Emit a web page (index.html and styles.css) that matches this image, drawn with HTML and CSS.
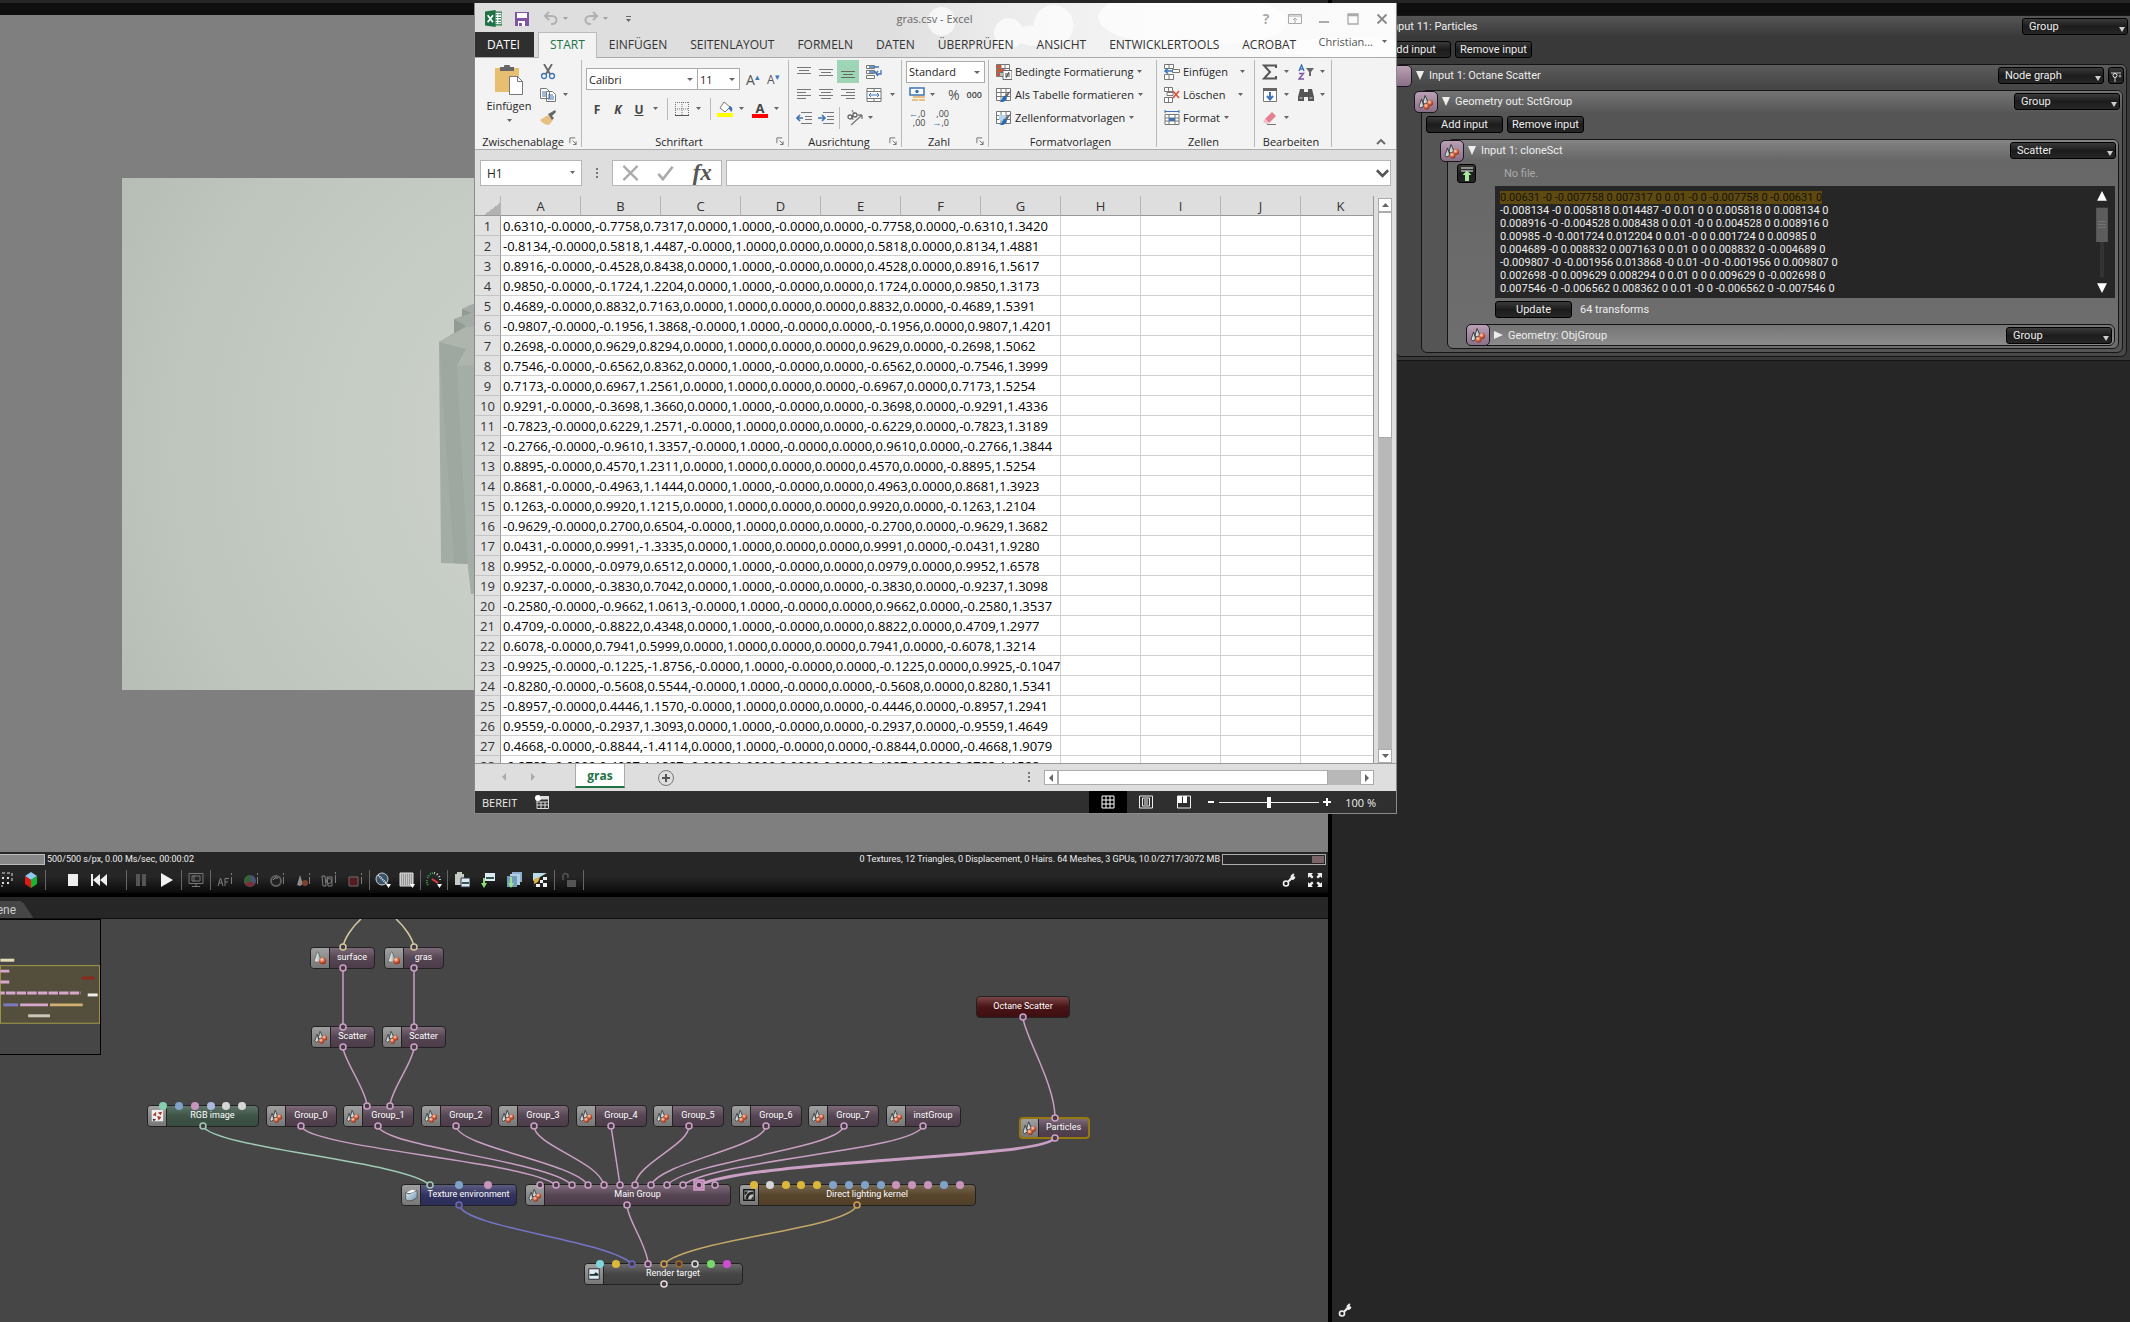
FILE: index.html
```html
<!DOCTYPE html>
<html lang="de">
<head>
<meta charset="utf-8">
<title>gras.csv - Excel</title>
<link rel="stylesheet" href="styles.css">
</head>
<body>
<svg class="defs" aria-hidden="true">
  <defs>
    <radialGradient id="ball" cx="40%" cy="35%" r="65%"><stop offset="0" stop-color="#ffe0d0"/><stop offset=".5" stop-color="#dc6c48"/><stop offset="1" stop-color="#8c2c16"/></radialGradient>
    <linearGradient id="cone" x1="0" x2="1" y1="0" y2="0"><stop offset="0" stop-color="#ffffff"/><stop offset="1" stop-color="#8ba6aa"/></linearGradient>
    <linearGradient id="glass" x1="0" x2="1" y1="0" y2="1"><stop offset="0" stop-color="#e9f4fb"/><stop offset="1" stop-color="#6f92ad"/></linearGradient>
    <symbol id="mesh" viewBox="0 0 16 16"><path d="M4.500 1.500 6 1l3 9-3 3-4.500-1z" fill="url(#cone)" stroke="#444" stroke-width=".6"/><circle cx="11" cy="11" r="4" fill="url(#ball)"/></symbol>
    <symbol id="scat" viewBox="0 0 16 16"><path d="M7 1.500 10 8 7 10 5 9z" fill="url(#cone)" stroke="#222" stroke-width=".8"/><path d="M3.500 5 6 12l-3 2-2-1.500z" fill="url(#cone)" stroke="#222" stroke-width=".8"/><circle cx="12" cy="9" r="3" fill="url(#ball)"/><circle cx="8.500" cy="12.500" r="3" fill="url(#ball)"/></symbol>
    <symbol id="caret" viewBox="0 0 7 4"><path d="M1 0h5L3.500 3z" fill="#666"/></symbol>
    <symbol id="launch" viewBox="0 0 9 9"><path d="M1 7V1h6M4 4l4 4M8 5v3.500H4.500" fill="none" stroke="#666"/></symbol>
    <symbol id="wrench" viewBox="0 0 14 14"><path d="M6 8 9 4.500a3 3 0 0 1 3-3.500l-1 2 .5 1L13 4a3 3 0 0 1-3.500 2.500L6.500 9" fill="#eee" stroke="#eee"/><circle cx="4" cy="10.500" r="2.500" fill="none" stroke="#eee" stroke-width="1.600"/></symbol>
    <symbol id="tbl" viewBox="0 0 16 16"><path d="M.5 1.500h14v12H.5zM.5 5.500h14M.5 9.500h14M5 1.500v12M10 1.500v12" fill="#fff" stroke="#777"/></symbol>
    <symbol id="brush" viewBox="0 0 16 16"><path d="M15.500 3 11 10l-2-2z" fill="#666"/><path d="M9.500 8.500c2 1 1.500 3 0 5-2 2-4 1.500-6 1.500 3-1 2-6 6-6.500z" fill="#2b6cb5"/></symbol>
  </defs>
</svg>

<div class="app">
  <main class="left">
    <div class="topline"></div>
    <section class="viewport">
      <svg class="render" viewBox="0 0 1084 512" preserveAspectRatio="xMinYMid slice">
        <defs><radialGradient id="fog" gradientUnits="userSpaceOnUse" cx="480" cy="270" r="540"><stop offset="0" stop-color="#d0d5ce"/><stop offset=".5" stop-color="#c5ccc4"/><stop offset=".8" stop-color="#bdc5bd"/><stop offset="1" stop-color="#b6beb6"/></radialGradient></defs>
        <rect width="1084" height="512" fill="url(#fog)"/>
        <path d="m317 164 15-9v-14l8-3v-7l8-4 22-6v295h-21l-2-30-28-1z" fill="#a4ada5"/>
        <path d="m317 164 26 7-8 17 12 198-15-1z" fill="#9fa8a0"/><path d="m332 141 12 7-12 7zM340 131l10 4-10 3z" fill="#929b93"/>
        <path d="m335 188 9-17 30-2v247h-25l-3-26z" fill="#a5aea6"/><path d="m317 164 28-15h30v36l-40 3 9-17z" fill="#adb5ad"/>
      </svg>
    </section>
    <section class="controls">
      <div class="status">
        <span class="progress"></span><span>500/500 s/px, 0.00 Ms/sec, 00:00:02</span>
        <span class="stats">0 Textures, 12 Triangles, 0 Displacement, 0 Hairs. 64 Meshes, 3 GPUs, 10.0/2717/3072 MB</span><span class="mem"><i></i></span>
      </div>
      <div class="tools">
        <button aria-label="Region"><svg viewBox="0 0 16 16"><path d="M5 1h10v10M4 14h2" stroke="#ddd" fill="none" stroke-dasharray="3 2"/><path d="M5 5h2v2H5zM10 5h2v2h-2zM5 10h2v2H5zM10 10h2v2h-2z" fill="#ddd"/></svg></button>
        <button aria-label="Cube"><svg viewBox="0 0 16 16"><path d="m8 0 6 4-6 4-6-4z" fill="#8fc9ee"/><path d="m2 4 6 4v8l-6-4z" fill="#e01818"/><path d="m14 4-6 4v8l6-4z" fill="#16b52e"/></svg></button>
        <hr><span class="space"></span>
        <button aria-label="Stop"><svg viewBox="0 0 16 16"><path d="M3 2h10v12H3z" fill="#eee"/></svg></button>
        <button aria-label="Restart"><svg viewBox="0 0 16 16"><path d="M0 2h2v12H0zM9 2v12L2 8zM16 2v12L9 8z" fill="#eee"/></svg></button>
        <span class="space"></span><hr>
        <button aria-label="Pause"><svg viewBox="0 0 16 16"><path d="M3 2h4v12H3zM9 2h4v12H9z" fill="#555"/></svg></button>
        <button aria-label="Play"><svg viewBox="0 0 16 16"><path d="M2 1v14l12-7z" fill="#f2f2f2"/></svg></button>
        <hr>
        <button aria-label="Real time"><svg viewBox="0 0 16 16"><path d="M1 1.500h14v10H1zM4 14.500h8M8 12v2M4 4v5h8V4zM6 3v7" fill="none" stroke="#777"/></svg></button>
        <hr>
        <button class="dim" aria-label="Autofocus"><svg viewBox="0 0 16 16"><path d="m1 14 2.500-8L6 14M2 11h3M8 14V6.500h4M8 10h3M14.500 5v7M14.500 1v2" fill="none" stroke="#888"/></svg></button>
        <button class="dim" aria-label="White point"><svg viewBox="0 0 16 16"><circle cx="7" cy="9" r="6" fill="#4a5c7a"/><path d="M7 9V3a6 6 0 0 0-5 9z" fill="#396b35"/><path d="M7 9 2 12a6 6 0 0 0 10 0z" fill="#86303a"/><path d="M14.500 5v7M14.500 1v2" stroke="#888"/></svg></button>
        <button class="dim" aria-label="Material"><svg viewBox="0 0 16 16"><circle cx="7" cy="9" r="5" fill="#222" stroke="#666" stroke-width="2"/><path d="M4 8a4 4 0 0 1 5-2" fill="none" stroke="#aaa"/><path d="M14.500 5v7M14.500 1v2" stroke="#888"/></svg></button>
        <button class="dim" aria-label="Object"><svg viewBox="0 0 16 16"><path d="m5 3 3 9-3 2-3-1z" fill="#999"/><circle cx="10" cy="11" r="3" fill="#84492e"/><path d="M14.500 5v7M14.500 1v2" stroke="#888"/></svg></button>
        <button class="dim" aria-label="Camera"><svg viewBox="0 0 16 16"><path d="M1 4h3l1 10H2zM6 5h5v9H7z" fill="none" stroke="#888"/><circle cx="8" cy="9" r="2.500" fill="none" stroke="#888"/><path d="M14.500 3v8M14.500 0v2" stroke="#888"/></svg></button>
        <button class="dim" aria-label="Region pick"><svg viewBox="0 0 16 16"><path d="M2 5h9v9H2z" fill="#5a1c1c" stroke="#777"/><path d="M14.500 5v7M14.500 1v2" stroke="#888"/></svg></button>
        <hr>
        <button class="nar" aria-label="Render mode"><svg viewBox="0 0 16 16"><circle cx="7" cy="7" r="6" fill="#38546a" stroke="#ccc"/><path d="m3 3 9 9" stroke="#eee" stroke-width="2" stroke-dasharray="1 1"/><path d="M11 12h5l-2.500 4z" fill="#fff"/></svg></button>
        <button class="nar" aria-label="Alpha"><svg viewBox="0 0 16 16"><path d="M1 1h13v13H1z" fill="#999"/><path d="M1 2h13M1 4h13M1 6h13M1 8h13M1 10h13M1 12h13" stroke="#eee" stroke-dasharray="1 1"/><path d="M1 1h13v13H1z" fill="none" stroke="#ddd"/><path d="M11 12h5l-2.500 4z" fill="#fff"/></svg></button>
        <hr>
        <button class="nar" aria-label="Priority"><svg viewBox="0 0 16 16"><path d="M2 13a7 7 0 0 1-1-5M1.500 6 3 3M4 2l3-1" stroke="#35a04a" stroke-width="2" stroke-dasharray="1 1" fill="none"/><path d="M8 1a7 7 0 0 1 6 7" stroke="#d8d8d8" stroke-width="2" stroke-dasharray="1 2" fill="none"/><path d="m6 7 6 4" stroke="#e04040" stroke-width="2"/><path d="M11 12h5l-2.500 4z" fill="#fff"/></svg></button>
        <hr>
        <button aria-label="Copy"><svg viewBox="0 0 16 16"><path d="M1 2h9v11H1zM3 0h5v3H3z" fill="#c4ccc4"/><path d="M7 6h9v9H7z" fill="#dcebf2" stroke="#334"/><path d="M8 10h7v2H8z" fill="#355"/></svg></button>
        <button aria-label="Save image"><svg viewBox="0 0 16 16"><path d="M5 1h10v8H5z" fill="#dcebf2"/><path d="M6 5h8v2H6z" fill="#355"/><path d="M3 6h2v5h2l-3 5-3-5h2z" fill="#8fdc7a"/></svg></button>
        <button aria-label="Save all"><svg viewBox="0 0 16 16"><path d="M6 0h10v10H6z" fill="#8fb0cc"/><path d="M4 2h10v11H4z" fill="#b5cfe2"/><path d="M1 4h10v11H1z" fill="#6f9dbb"/><path d="M4 5h2v6h2l-3 5-3-5h2z" fill="#9fe08a"/></svg></button>
        <button aria-label="Background"><svg viewBox="0 0 16 16"><path d="M1 1h14v14H1z" fill="#222"/><path d="M1 1h14L1 9z" fill="#b8dcea"/><path d="M8 8h3v3H8zM11 5h4v3h-4zM11 11h4v4h-4zM4 12h4v3H4z" fill="#eee"/><path d="m2 7 6-2-2 5-4 2z" fill="#d8b042"/></svg></button>
        <hr>
        <button aria-label="Lock"><svg viewBox="0 0 16 16"><path d="M2 8V4a2 2 0 0 1 5 0v2" fill="none" stroke="#555" stroke-width="1.500"/><path d="M6 8h9v7H6z" fill="#555"/></svg></button>
        <hr>
        <span class="push"></span>
        <button aria-label="Settings"><svg class="s14" viewBox="0 0 14 14"><use href="#wrench"/></svg></button>
        <button aria-label="Fullscreen"><svg class="s14" viewBox="0 0 14 14"><path d="M0 0h5L3.500 1.500 5.500 4 4 5.500 1.500 3.500 0 5zM14 0H9l1.500 1.500L8.500 4 10 5.500l2.500-2L14 5zM0 14h5l-1.500-1.500 2-2.500L4 8.500l-2.500 2L0 9zM14 14H9l1.500-1.500-2-2.500L10 8.500l2.500 2L14 9z" fill="#eee"/></svg></button>
      </div>
    </section>
    <div class="tabs"><button>Scene</button></div>
    <section class="graph">
      <svg class="edges" aria-hidden="true">
        <g fill="none" stroke-width="1.500">
          <path stroke="#d2cba2" d="M343 28C344 20 352 8 361 0M414 28C413 20 405 8 396 0"/>
          <g stroke="#c99fc4">
            <path d="M343 49V108M414 49V108M343 128C343 140 367 172 367 187M414 128C414 142 390 172 390 187"/>
            <path d="M301 207C309 229 526 242 556 266M378 207C384 228 548 242 572 266M456 207C459 228 572 243 588 266M534 207C534 226 598 242 604 266M611 207 620 266M689 207C689 226 637 244 635 266M766 207C764 228 662 243 651 266M844 207C838 230 690 242 667 266M923 207C912 232 720 240 683 266"/>
            <path d="M627 286C627 300 648 328 648 345M1023 98C1023 114 1055 164 1055 199"/>
            <path stroke-width="3" d="M1055 219C1040 240 760 240 699 266"/>
          </g>
          <path stroke="#9fccb6" d="M203 207C212 229 404 242 430 266"/>
          <path stroke="#7674c8" d="M459 286C464 309 608 321 632 345"/>
          <path stroke="#c4a868" d="M857 286C849 310 688 320 664 345"/>
        </g>
      </svg>
      <div class="node" style="left:310px;top:28px;width:65px"><svg><use href="#mesh"/></svg><span>surface</span></div>
      <div class="node" style="left:384px;top:28px;width:60px"><svg><use href="#mesh"/></svg><span>gras</span></div>
      <div class="node" style="left:311px;top:107px;width:64px"><svg><use href="#scat"/></svg><span>Scatter</span></div>
      <div class="node" style="left:382px;top:107px;width:64px"><svg><use href="#scat"/></svg><span>Scatter</span></div>
      <div class="node green" style="left:147px;top:186px;width:112px"><svg viewBox="0 0 16 16"><path d="M2 1h13v13H2z" fill="#eee"/><path d="m3 7 4-4v5zM9 4l5-1-2 4zM8 8l5 1-3 4z" fill="#a33a2c"/><path d="m3 11 4 1-3 2z" fill="#222"/></svg><span>RGB image</span></div>
      <div class="node" style="left:266px;top:186px;width:71px"><svg><use href="#scat"/></svg><span>Group_0</span></div>
      <div class="node" style="left:343px;top:186px;width:71px"><svg><use href="#scat"/></svg><span>Group_1</span></div>
      <div class="node" style="left:421px;top:186px;width:71px"><svg><use href="#scat"/></svg><span>Group_2</span></div>
      <div class="node" style="left:498px;top:186px;width:71px"><svg><use href="#scat"/></svg><span>Group_3</span></div>
      <div class="node" style="left:576px;top:186px;width:71px"><svg><use href="#scat"/></svg><span>Group_4</span></div>
      <div class="node" style="left:653px;top:186px;width:71px"><svg><use href="#scat"/></svg><span>Group_5</span></div>
      <div class="node" style="left:731px;top:186px;width:71px"><svg><use href="#scat"/></svg><span>Group_6</span></div>
      <div class="node" style="left:808px;top:186px;width:71px"><svg><use href="#scat"/></svg><span>Group_7</span></div>
      <div class="node" style="left:886px;top:186px;width:75px"><svg><use href="#scat"/></svg><span>instGroup</span></div>
      <div class="node blue" style="left:401px;top:265px;width:116px"><svg viewBox="0 0 16 16"><path d="M2 5c2 2 5 2 7 0l6-2v8l-5 3c-3 1-6 1-8-1z" fill="url(#glass)" stroke="#333" stroke-width=".7"/><path d="M3 5c2 1 4 1 6 0l5-2-5-1z" fill="#fff"/></svg><span>Texture environment</span></div>
      <div class="node" style="left:525px;top:265px;width:206px"><svg><use href="#scat"/></svg><span>Main Group</span></div>
      <div class="node brown" style="left:739px;top:265px;width:237px"><svg viewBox="0 0 16 16"><path d="M2 2h12v12H2z" fill="#bbb" stroke="#111" stroke-width="1.500"/><path d="M4 13c0-5 3-9 9-9v3c-4 0-6 2-6 6zM3 4h4L4 8H3zM10 13l3-4v4z" fill="#222"/></svg><span>Direct lighting kernel</span></div>
      <div class="node gray" style="left:584px;top:344px;width:159px"><svg viewBox="0 0 16 16"><path d="M2 2h12v12H2z" fill="#dfe9f4" stroke="#222"/><path d="M3 8h5l2-2 3 2v2H3z" fill="#1c3328"/></svg><span>Render target</span></div>
      <div class="node red" style="left:976px;top:77px;width:94px"><span>Octane Scatter</span></div>
      <div class="node sel" style="left:1019px;top:198px;width:71px"><svg><use href="#scat"/></svg><span>Particles</span></div>
      <svg class="edges" aria-hidden="true">
        <g fill="#463a46" stroke="#cfa0c8" stroke-width="1.500">
          <g stroke="#cfc9a0"><circle cx="343" cy="28" r="3"/><circle cx="414" cy="28" r="3"/></g>
          <circle cx="343" cy="49" r="3"/><circle cx="414" cy="49" r="3"/><circle cx="343" cy="108" r="3"/><circle cx="414" cy="108" r="3"/><circle cx="343" cy="128" r="3"/><circle cx="414" cy="128" r="3"/><circle cx="367" cy="187" r="3"/><circle cx="390" cy="187" r="3"/>
          <circle cx="301" cy="207" r="3"/><circle cx="378" cy="207" r="3"/><circle cx="456" cy="207" r="3"/><circle cx="534" cy="207" r="3"/><circle cx="611" cy="207" r="3"/><circle cx="689" cy="207" r="3"/><circle cx="766" cy="207" r="3"/><circle cx="844" cy="207" r="3"/><circle cx="923" cy="207" r="3"/>
          <circle cx="540" cy="266" r="3"/><circle cx="556" cy="266" r="3"/><circle cx="572" cy="266" r="3"/><circle cx="588" cy="266" r="3"/><circle cx="604" cy="266" r="3"/><circle cx="620" cy="266" r="3"/><circle cx="635" cy="266" r="3"/><circle cx="651" cy="266" r="3"/><circle cx="667" cy="266" r="3"/><circle cx="683" cy="266" r="3"/><rect x="694" y="261" width="10" height="10" fill="#b878b0"/><circle cx="699" cy="266" r="3"/><circle cx="715" cy="266" r="3"/>
          <circle cx="627" cy="286" r="3"/><circle cx="648" cy="345" r="3"/><circle cx="1023" cy="98" r="3"/><circle cx="1055" cy="199" r="3"/><circle cx="1055" cy="219" r="3"/>
          <g stroke="#9fccb6"><circle cx="203" cy="207" r="3"/><circle cx="430" cy="266" r="3"/></g>
          <g stroke="#6a68c0"><circle cx="459" cy="286" r="3"/><circle cx="632" cy="345" r="3"/></g>
          <g stroke="#d0a24e"><circle cx="857" cy="286" r="3"/><circle cx="664" cy="345" r="3"/></g>
          <circle cx="679" cy="345" r="3" stroke="#a36a20"/><g stroke="#ddd"><circle cx="695" cy="345" r="3"/><circle cx="664" cy="365" r="3"/></g>
        </g>
        <g fill="#7fa3c8"><circle cx="179" cy="187" r="4"/><circle cx="459" cy="266" r="4"/><circle cx="833" cy="266" r="4"/><circle cx="849" cy="266" r="4"/><circle cx="865" cy="266" r="4"/><circle cx="881" cy="266" r="4"/><circle cx="944" cy="266" r="4"/><circle cx="211" cy="187" r="4" fill="#a9b9de"/></g>
        <g fill="#c795bc"><circle cx="195" cy="187" r="4"/><circle cx="488" cy="266" r="4"/><circle cx="896" cy="266" r="4"/><circle cx="912" cy="266" r="4"/><circle cx="928" cy="266" r="4"/><circle cx="960" cy="266" r="4"/></g>
        <g fill="#dcb83a"><circle cx="754" cy="266" r="4"/><circle cx="786" cy="266" r="4"/><circle cx="801" cy="266" r="4"/><circle cx="817" cy="266" r="4"/><circle cx="616" cy="345" r="4"/></g>
        <g fill="#d6d6d6"><circle cx="226" cy="187" r="4"/><circle cx="242" cy="187" r="4"/><circle cx="770" cy="266" r="4"/></g>
        <circle cx="163" cy="187" r="4" fill="#86d0b0"/><circle cx="600" cy="345" r="4" fill="#80d8dc"/><circle cx="711" cy="345" r="4" fill="#78d86c"/><circle cx="727" cy="345" r="4" fill="#d04cd0"/>
      </svg>
      <svg class="minimap" viewBox="0 0 100 135">
        <rect y="46" width="100" height="58" fill="#544e3c" stroke="#a59c48"/>
        <path d="M0 39h14v3H0z" fill="#e2dcb6"/><path d="M82 57h13v3H82z" fill="#8a2a1c"/>
        <path d="M0 50h9v3H0zM0 61h9v3H0zM20 84h28v3H20z" fill="#d8a8cc"/><path d="M0 73.500h81" stroke="#d8a8cc" stroke-width="3" stroke-dasharray="9.500 1.200" stroke-dashoffset="5"/>
        <path d="M88 74h10v3H88z" fill="#eee"/><path d="M3 84h15v3H3z" fill="#7b79c0"/><path d="M50 84h33v3H50z" fill="#d2b070"/><path d="M28 95h22v3H28z" fill="#c9c5b8"/>
      </svg>
    </section>
  </main>

  <aside class="right">
    <div class="topline"></div>
    <div class="box outer">
      <header><span class="ttl">Input 11: Particles</span><span class="sel-w"><select aria-label="Particles type"><option>Group</option></select></span></header>
      <div class="btns"><button>Add input</button><button>Remove input</button></div>
      <div class="box b1">
        <header><i class="pin"></i><b class="tri"></b><span class="ttl">Input 1: Octane Scatter</span><span class="sel-w"><select aria-label="Octane Scatter type"><option>Node graph</option></select></span><button class="mini" aria-label="Open graph"><svg viewBox="0 0 12 14"><path d="M1 4h10M5 8v5" stroke="#ccc"/><circle cx="5" cy="6.500" r="2" fill="#222" stroke="#eee"/><circle cx="10" cy="7" r="1.500" fill="#888"/></svg></button></header>
        <div class="box b2">
          <header><i class="pin"><svg><use href="#scat"/></svg></i><b class="tri"></b><span class="ttl">Geometry out: SctGroup</span><span class="sel-w"><select aria-label="SctGroup type"><option>Group</option></select></span></header>
          <div class="btns"><button>Add input</button><button>Remove input</button></div>
          <div class="box b3">
            <header><i class="pin"><svg><use href="#scat"/></svg></i><b class="tri"></b><span class="ttl">Input 1: cloneSct</span><span class="sel-w"><select aria-label="cloneSct type"><option>Scatter</option></select></span></header>
            <div class="file"><button aria-label="Load file"><svg viewBox="0 0 14 14"><path d="M1 1h12M1 4h12" stroke="#eee"/><path d="M7 3.500 11.500 8H9v6H5V8H2.500z" fill="#a8e89a"/></svg></button><span>No file.</span></div>
            <div class="data">
              <div class="lines" tabindex="0"><mark>0.00631 -0 -0.007758 0.007317 0 0.01 -0 0 -0.007758 0 -0.00631 0</mark><br>-0.008134 -0 0.005818 0.014487 -0 0.01 0 0 0.005818 0 0.008134 0<br>0.008916 -0 -0.004528 0.008438 0 0.01 -0 0 0.004528 0 0.008916 0<br>0.00985 -0 -0.001724 0.012204 0 0.01 -0 0 0.001724 0 0.00985 0<br>0.004689 -0 0.008832 0.007163 0 0.01 0 0 0.008832 0 -0.004689 0<br>-0.009807 -0 -0.001956 0.013868 -0 0.01 -0 0 -0.001956 0 0.009807 0<br>0.002698 -0 0.009629 0.008294 0 0.01 0 0 0.009629 0 -0.002698 0<br>0.007546 -0 -0.006562 0.008362 0 0.01 -0 0 -0.006562 0 -0.007546 0</div>
              <svg class="scr" viewBox="0 0 14 104"><path d="M7 0l5 10H2zM7 104l5-10H2z" fill="#fff"/><path d="M5 52h4v36H5z" fill="#333"/><path d="M1 17h12v35H1z" fill="#5c5c5c"/><path d="M3 31h8M3 34h8M3 37h8" stroke="#777"/></svg>
            </div>
            <div class="btns upd"><button>Update</button><span>64 transforms</span></div>
            <div class="box b4"><header><i class="pin"><svg><use href="#scat"/></svg></i><b class="tri side"></b><span class="ttl">Geometry: ObjGroup</span><span class="sel-w"><select aria-label="ObjGroup type"><option>Group</option></select></span></header></div>
          </div>
        </div>
      </div>
    </div>
    <button class="cfg" aria-label="Panel settings"><svg class="s14" viewBox="0 0 14 14"><use href="#wrench"/></svg></button>
  </aside>
</div>

<div class="excel">
  <div class="head">
    <svg class="clouds" viewBox="0 0 520 53" preserveAspectRatio="none" aria-hidden="true"><defs><linearGradient id="sky"><stop offset="0" stop-color="#dedede"/><stop offset=".2" stop-color="#eaeaea"/><stop offset=".6" stop-color="#f8f8f8"/><stop offset="1" stop-color="#fbfbfb"/></linearGradient></defs><path d="M0 0H520V53H0z" fill="url(#sky)"/><g fill="#fff" opacity=".7"><circle cx="62" cy="18" r="14"/><circle cx="130" cy="30" r="15"/><circle cx="175" cy="22" r="20"/><ellipse cx="155" cy="32" rx="20" ry="10"/><ellipse cx="280" cy="14" rx="60" ry="24"/><ellipse cx="350" cy="18" rx="60" ry="22"/><ellipse cx="470" cy="44" rx="70" ry="10"/></g></svg>
    <div class="title">
      <div class="qat">
        <svg viewBox="0 0 16 16"><path d="M8 2h8v12H8z" fill="#fff" stroke="#207245"/><path d="M10 4.500h1.500m1 0H15M10 7h1.500m1 0H15M10 9.500h1.500m1 0H15M10 12h1.500m1 0H15" stroke="#207245"/><path d="M0 1.500 10 0v16L0 14.500z" fill="#207245"/><path d="m2.500 5 5 6.500M7.500 5l-5 6.500" stroke="#fff" stroke-width="1.600"/></svg>
        <button aria-label="Speichern"><svg viewBox="0 0 16 16"><path d="M1 1h14v14H1z" fill="#8054a5"/><path d="M3 2h10v5H3z" fill="#fff"/><path d="M4 10h7v5H4z" fill="#fff"/><path d="M5 12h3v3H5z" fill="#8054a5"/></svg></button>
        <button aria-label="Rückgängig"><svg viewBox="0 0 16 16"><path d="M6 1 2 5l4 4M2 5h7c6 0 6 8 0 8H8" fill="none" stroke="#b0b0b0" stroke-width="2"/></svg></button><svg class="caret lt"><use href="#caret"/></svg>
        <button aria-label="Wiederholen"><svg viewBox="0 0 16 16"><path d="m10 1 4 4-4 4M14 5H7c-6 0-6 8 0 8h1" fill="none" stroke="#b0b0b0" stroke-width="2"/></svg></button><svg class="caret lt"><use href="#caret"/></svg>
        <svg class="cust" viewBox="0 0 7 8"><path d="M1 1.500h5" stroke="#666"/><path d="M1 4h5L3.500 7z" fill="#666"/></svg>
      </div>
      <h1>gras.csv - Excel</h1>
      <div class="winbtn">
        <button aria-label="Hilfe">?</button>
        <button aria-label="Menüband"><svg viewBox="0 0 14 12"><path d="M.5 1.500h13v9H.5zM.5 3h13M7 10V5M5 7l2-2 2 2" fill="none" stroke="#aaa"/></svg></button>
        <button aria-label="Minimieren"><svg viewBox="0 0 14 12"><path d="M2 9h10" stroke="#aaa" stroke-width="2"/></svg></button>
        <button aria-label="Maximieren"><svg viewBox="0 0 14 12"><path d="M2 1h10v10H2zM2 2.500h10" fill="none" stroke="#aaa" stroke-width="1.300"/></svg></button>
        <button aria-label="Schließen"><svg viewBox="0 0 14 12"><path d="m2.500 1.500 9 9M11.500 1.500l-9 9" stroke="#888" stroke-width="1.800"/></svg></button>
      </div>
    </div>
    <nav><a class="datei" href="#">DATEI</a><a class="start" href="#">START</a><a href="#">EINFÜGEN</a><a href="#">SEITENLAYOUT</a><a href="#">FORMELN</a><a href="#">DATEN</a><a href="#">ÜBERPRÜFEN</a><a href="#">ANSICHT</a><a href="#">ENTWICKLERTOOLS</a><a href="#">ACROBAT</a><button class="user">Christian... <svg class="caret"><use href="#caret"/></svg></button></nav>
  </div>

  <div class="ribbon">
    <section class="g1">
      <div class="body">
        <button class="paste"><svg viewBox="0 0 28 30"><path d="M0 3h24v24H0z" fill="#e8bf70"/><path d="M5 6V2h4a3 3 0 0 1 6 0h4v4z" fill="#666"/><path d="M14.500 11.500h8l5 5v13h-13z" fill="#fff" stroke="#777"/><path d="M22.500 11.500v5h5" fill="none" stroke="#777"/></svg>Einfügen<svg class="caret"><use href="#caret"/></svg></button>
        <div class="rows">
          <div><button aria-label="Ausschneiden"><svg viewBox="0 0 16 16"><path d="m4 0 6 10M12 0 6 10" stroke="#666" stroke-width="1.800"/><circle cx="4" cy="12" r="2.500" fill="none" stroke="#3e73b5" stroke-width="1.300"/><circle cx="12" cy="12" r="2.500" fill="none" stroke="#3e73b5" stroke-width="1.300"/></svg></button></div>
          <div><button aria-label="Kopieren"><svg viewBox="0 0 16 16"><path d="M.5 1.500h6l3 3v7h-9zM6.500 4.500h6l3 3v7h-9z" fill="#fff" stroke="#777"/><path d="M2 5h4M2 7h4M2 9h4M8 8h5M8 10h6M8 12h6" stroke="#3e73b5"/></svg></button><svg class="caret"><use href="#caret"/></svg></div>
          <div><button aria-label="Format übertragen"><svg viewBox="0 0 16 16"><path d="m8 5 5 5-4 5c-3 0-7-2-9-5z" fill="#e8bf83"/><path d="m8 4 2-1 5-3 1 2-4 4 2 2-2 2z" fill="#666"/></svg></button></div>
        </div>
      </div>
      <footer><span>Zwischenablage</span><svg class="launch"><use href="#launch"/></svg></footer>
    </section>
    <section class="g2">
      <div class="body two">
        <div><span class="cb font"><select aria-label="Schriftart"><option>Calibri</option></select></span><span class="cb size"><select aria-label="Schriftgrad"><option>11</option></select></span><button class="ab" aria-label="Größer">A<sup>▴</sup></button><button class="ab sm" aria-label="Kleiner">A<sup>▾</sup></button></div>
        <div class="fmt"><button><b>F</b></button><button><b><i>K</i></b></button><button><b><u>U</u></b></button><svg class="caret"><use href="#caret"/></svg><hr>
          <button aria-label="Rahmen"><svg viewBox="0 0 16 16"><path d="M1.500 1v14M8 1v14M14.500 1v14M1 1.500h14M1 8h14" stroke="#777" stroke-dasharray="1 1"/><path d="M1 14.500h14" stroke="#555"/></svg></button><svg class="caret"><use href="#caret"/></svg><hr>
          <button aria-label="Füllfarbe"><svg viewBox="0 0 16 16"><path d="m7 1 6 5-5 5-5-4z" fill="#fff" stroke="#777"/><path d="M13 5c3 1 3 5 1 6-1-2-1-3-3-3z" fill="#3e73b5"/><path d="M0 12h16v4H0z" fill="#ff0"/></svg></button><svg class="caret"><use href="#caret"/></svg>
          <button class="acol">A</button><svg class="caret"><use href="#caret"/></svg></div>
      </div>
      <footer><span>Schriftart</span><svg class="launch"><use href="#launch"/></svg></footer>
    </section>
    <section class="g3">
      <div class="body rows">
        <div><button aria-label="Oben"><svg viewBox="0 0 16 16"><path d="M1 3.500h14M3 6.500h10M1 9.500h14" stroke="#777"/></svg></button><button aria-label="Mitte"><svg viewBox="0 0 16 16"><path d="M1 5.500h14M3 8.500h10M1 11.500h14" stroke="#777"/></svg></button><button class="on" aria-label="Unten"><svg viewBox="0 0 16 16"><path d="M1 7.500h14M3 10.500h10M1 13.500h14" stroke="#666"/></svg></button><button class="wide" aria-label="Zeilenumbruch"><svg viewBox="0 0 16 16"><path d="M.5 1.500h8v3h-8zM.5 6.500h8v3h-8zM.5 11.500h8v3h-8z" fill="#fff" stroke="#777"/><path d="M3 3h10M3 8h7M15 6v4h-5M12 7l-2 2.500L12 12" fill="none" stroke="#3e73b5" stroke-width="1.300"/></svg></button></div>
        <div><button aria-label="Links"><svg viewBox="0 0 16 16"><path d="M1 2.500h14M1 5.500h9M1 8.500h14M1 11.500h9" stroke="#777"/></svg></button><button aria-label="Zentriert"><svg viewBox="0 0 16 16"><path d="M1 2.500h14M3 5.500h10M1 8.500h14M3 11.500h10" stroke="#777"/></svg></button><button aria-label="Rechts"><svg viewBox="0 0 16 16"><path d="M1 2.500h14M6 5.500h9M1 8.500h14M6 11.500h9" stroke="#777"/></svg></button><button class="wide" aria-label="Verbinden"><svg viewBox="0 0 16 16"><path d="M1 1.500h14v13H1zM1 4.500h14M1 11.500h14M8 1.500v3M8 11.500v3" fill="#fff" stroke="#777"/><path d="M3 8h10M5 6 3 8l2 2M11 6l2 2-2 2" fill="none" stroke="#3e73b5"/></svg></button><svg class="caret"><use href="#caret"/></svg></div>
        <div><button aria-label="Einzug verkleinern"><svg viewBox="0 0 16 16"><path d="M5 2.500h11M9 6.500h7M9 9.500h7M5 13.500h11" stroke="#777"/><path d="M7 8H1M4 5 1 8l3 3" fill="none" stroke="#3e73b5" stroke-width="1.600"/></svg></button><button aria-label="Einzug vergrößern"><svg viewBox="0 0 16 16"><path d="M5 2.500h11M9 6.500h7M9 9.500h7M5 13.500h11" stroke="#777"/><path d="M0 8h6M4 5l3 3-3 3" fill="none" stroke="#3e73b5" stroke-width="1.600"/></svg></button><hr><button class="wide" aria-label="Ausrichtung"><svg viewBox="0 0 16 16"><path d="M4 15 15 5M15 5l-4 0M15 5v4" fill="none" stroke="#777" stroke-width="1.300"/><circle cx="3" cy="7" r="2" fill="none" stroke="#666" stroke-width="1.300"/><circle cx="8" cy="5" r="2" fill="none" stroke="#666" stroke-width="1.300"/><path d="m5 5 1 5M5 0l2 4" stroke="#666"/></svg></button><svg class="caret"><use href="#caret"/></svg></div>
      </div>
      <footer><span>Ausrichtung</span><svg class="launch"><use href="#launch"/></svg></footer>
    </section>
    <section class="g4">
      <div class="body rows">
        <div><span class="cb num"><select aria-label="Zahlenformat"><option>Standard</option></select></span></div>
        <div><button aria-label="Währung"><svg viewBox="0 0 16 16"><path d="M1 1h14v7H1z" fill="#fff" stroke="#3e73b5" stroke-width="1.500"/><circle cx="8" cy="4.500" r="1.800" fill="#3e73b5"/><path d="M4 9h6v2H4zM3 12h6v2H3zM10 9h6v2h-6zM10 12h6v2h-6z" fill="#e8bf83"/></svg></button><svg class="caret"><use href="#caret"/></svg><button class="pct">%</button><button class="k">000</button></div>
        <div><button aria-label="Dezimalstelle hinzufügen" class="dec"><span><em>←</em>,0</span><span>,00</span></button><button aria-label="Dezimalstelle löschen" class="dec"><span>,00</span><span><em>→</em>,0</span></button></div>
      </div>
      <footer><span>Zahl</span><svg class="launch"><use href="#launch"/></svg></footer>
    </section>
    <section class="g5">
      <div class="body rows">
        <div><button class="lb"><svg viewBox="0 0 16 16"><path d="M.5.500h13v12H.5zM.5 4.500h13M.5 8.500h13M5 .5v12M9 .5v12" fill="#fff" stroke="#777"/><path d="M1 1h4v3H1zM1 5h7v3H1zM1 9h3v3H1z" fill="#cf5537"/><path d="M7 6.500h9v9H7z" fill="#fff" stroke="#666"/><path d="M9 10h5M9 12h5M13 8l-3 6" stroke="#444"/></svg>Bedingte Formatierung<svg class="caret"><use href="#caret"/></svg></button></div>
        <div><button class="lb"><svg viewBox="0 0 16 16"><use href="#tbl"/><use href="#brush"/></svg>Als Tabelle formatieren<svg class="caret"><use href="#caret"/></svg></button></div>
        <div><button class="lb"><svg viewBox="0 0 16 16"><use href="#tbl"/><path d="M3 5h7v5H3z" fill="#b8d3ec"/><use href="#brush"/></svg>Zellenformatvorlagen<svg class="caret"><use href="#caret"/></svg></button></div>
      </div>
      <footer><span>Formatvorlagen</span></footer>
    </section>
    <section class="g6">
      <div class="body rows">
        <div><button class="lb"><svg viewBox="0 0 16 16"><path d="M.5.500h9v4h-9zM5 .5v4M.5 10.500h9v5h-9zM5 10.500v5M8.500 5.500h7v3h-7z" fill="#fff" stroke="#777"/><path d="M9 7H1M4 4.500 1 7l3 2.500" fill="none" stroke="#3e73b5" stroke-width="1.500"/></svg>Einfügen<svg class="caret far"><use href="#caret"/></svg></button></div>
        <div><button class="lb"><svg viewBox="0 0 16 16"><path d="M.5.500h8v4h-8zM4.500.500v4M.5 10.500h8v5h-8zM4.500 10.500v5M3 5.500h6v3H3z" fill="#fff" stroke="#777"/><path d="m9 4 6 7M15 4 9 11" stroke="#d9503c" stroke-width="1.600"/></svg>Löschen<svg class="caret far"><use href="#caret"/></svg></button></div>
        <div><button class="lb"><svg viewBox="0 0 16 16"><path d="M1 4.500h14v10H1zM1 8h14M1 11h14M5 4.500v10M11 4.500v10" fill="#fff" stroke="#777"/><path d="M5 8h6v3H5z" fill="#3e73b5"/><path d="M1 0v3M15 0v3M1 1.500h14" stroke="#3e73b5"/></svg>Format<svg class="caret"><use href="#caret"/></svg></button></div>
      </div>
      <footer><span>Zellen</span></footer>
    </section>
    <section class="g7">
      <div class="body rows">
        <div><button aria-label="Summe"><svg viewBox="0 0 16 16"><path d="M14 4V1.500H2L8 8l-6 6.500h12V12" fill="none" stroke="#555" stroke-width="2"/></svg></button><svg class="caret"><use href="#caret"/></svg><button aria-label="Sortieren"><svg viewBox="0 0 16 16"><path d="M1 7 3.500 1 6 7M2 5h3" fill="none" stroke="#3e73b5" stroke-width="1.400"/><path d="M1 9.500h4.500L1 15h5" fill="none" stroke="#8054a5" stroke-width="1.400"/><path d="M8 4h8l-3 4v4h-2V8z" fill="#666"/></svg></button><svg class="caret"><use href="#caret"/></svg></div>
        <div><button aria-label="Füllbereich"><svg viewBox="0 0 16 16"><path d="M1.500 1.500h13v13h-13z" fill="#fff" stroke="#777"/><path d="M1 1h14v3H1z" fill="#666"/><path d="M8 5v7M5 9l3 3.500L11 9" fill="none" stroke="#3e73b5" stroke-width="2"/></svg></button><svg class="caret"><use href="#caret"/></svg><button aria-label="Suchen"><svg viewBox="0 0 16 16"><path d="M2 2h4v3h4V2h4l2 8v4h-6v-4H6v4H0v-4z" fill="#555"/><path d="M1.500 11h3M11.500 11h3" stroke="#ddd"/></svg></button><svg class="caret"><use href="#caret"/></svg></div>
        <div><button aria-label="Löschen"><svg viewBox="0 0 16 16"><path d="m3 9 7-7 4 4-7 7z" fill="#e57f92"/><path d="m3 9 4 4-2 1-4-2z" fill="#f5c0ca"/><path d="M5 14.500h9" stroke="#777"/></svg></button><svg class="caret"><use href="#caret"/></svg></div>
      </div>
      <footer><span>Bearbeiten</span></footer>
    </section>
    <button class="fold" aria-label="Menüband reduzieren"><svg viewBox="0 0 10 6"><path d="m1 5 4-4 4 4" fill="none" stroke="#666" stroke-width="1.800"/></svg></button>
  </div>

  <div class="fbar">
    <div class="namebox"><input value="H1" aria-label="Namenfeld"><svg class="caret"><use href="#caret"/></svg></div>
    <span class="dots"></span>
    <div class="fx"><svg viewBox="0 0 18 18"><path d="m1 1 16 16M17 1 1 17" stroke="#aaa" stroke-width="2.500"/></svg><svg viewBox="0 0 18 18"><path d="m1 10 5 6L17 2" fill="none" stroke="#aaa" stroke-width="3"/></svg><button aria-label="Funktion einfügen"><i>fx</i></button></div>
    <div class="formula"><input aria-label="Bearbeitungsleiste"><svg viewBox="0 0 14 9"><path d="m1 1 6 6 6-6" fill="none" stroke="#555" stroke-width="2.800"/></svg></div>
  </div>

  <div class="sheet">
    <div class="gridwrap">
      <table>
        <colgroup><col class="c0"><col><col><col><col><col><col><col><col><col><col><col></colgroup>
        <thead><tr><th class="corner"></th><th>A</th><th>B</th><th>C</th><th>D</th><th>E</th><th>F</th><th>G</th><th>H</th><th>I</th><th>J</th><th>K</th></tr></thead>
        <tbody>
<tr><th>1</th><td colspan="7">0.6310,-0.0000,-0.7758,0.7317,0.0000,1.0000,-0.0000,0.0000,-0.7758,0.0000,-0.6310,1.3420</td><td></td><td></td><td></td><td></td></tr>
<tr><th>2</th><td colspan="7">-0.8134,-0.0000,0.5818,1.4487,-0.0000,1.0000,0.0000,0.0000,0.5818,0.0000,0.8134,1.4881</td><td></td><td></td><td></td><td></td></tr>
<tr><th>3</th><td colspan="7">0.8916,-0.0000,-0.4528,0.8438,0.0000,1.0000,-0.0000,0.0000,0.4528,0.0000,0.8916,1.5617</td><td></td><td></td><td></td><td></td></tr>
<tr><th>4</th><td colspan="7">0.9850,-0.0000,-0.1724,1.2204,0.0000,1.0000,-0.0000,0.0000,0.1724,0.0000,0.9850,1.3173</td><td></td><td></td><td></td><td></td></tr>
<tr><th>5</th><td colspan="7">0.4689,-0.0000,0.8832,0.7163,0.0000,1.0000,0.0000,0.0000,0.8832,0.0000,-0.4689,1.5391</td><td></td><td></td><td></td><td></td></tr>
<tr><th>6</th><td colspan="7">-0.9807,-0.0000,-0.1956,1.3868,-0.0000,1.0000,-0.0000,0.0000,-0.1956,0.0000,0.9807,1.4201</td><td></td><td></td><td></td><td></td></tr>
<tr><th>7</th><td colspan="7">0.2698,-0.0000,0.9629,0.8294,0.0000,1.0000,0.0000,0.0000,0.9629,0.0000,-0.2698,1.5062</td><td></td><td></td><td></td><td></td></tr>
<tr><th>8</th><td colspan="7">0.7546,-0.0000,-0.6562,0.8362,0.0000,1.0000,-0.0000,0.0000,-0.6562,0.0000,-0.7546,1.3999</td><td></td><td></td><td></td><td></td></tr>
<tr><th>9</th><td colspan="7">0.7173,-0.0000,0.6967,1.2561,0.0000,1.0000,0.0000,0.0000,-0.6967,0.0000,0.7173,1.5254</td><td></td><td></td><td></td><td></td></tr>
<tr><th>10</th><td colspan="7">0.9291,-0.0000,-0.3698,1.3660,0.0000,1.0000,-0.0000,0.0000,-0.3698,0.0000,-0.9291,1.4336</td><td></td><td></td><td></td><td></td></tr>
<tr><th>11</th><td colspan="7">-0.7823,-0.0000,0.6229,1.2571,-0.0000,1.0000,0.0000,0.0000,-0.6229,0.0000,-0.7823,1.3189</td><td></td><td></td><td></td><td></td></tr>
<tr><th>12</th><td colspan="7">-0.2766,-0.0000,-0.9610,1.3357,-0.0000,1.0000,-0.0000,0.0000,0.9610,0.0000,-0.2766,1.3844</td><td></td><td></td><td></td><td></td></tr>
<tr><th>13</th><td colspan="7">0.8895,-0.0000,0.4570,1.2311,0.0000,1.0000,0.0000,0.0000,0.4570,0.0000,-0.8895,1.5254</td><td></td><td></td><td></td><td></td></tr>
<tr><th>14</th><td colspan="7">0.8681,-0.0000,-0.4963,1.1444,0.0000,1.0000,-0.0000,0.0000,0.4963,0.0000,0.8681,1.3923</td><td></td><td></td><td></td><td></td></tr>
<tr><th>15</th><td colspan="7">0.1263,-0.0000,0.9920,1.1215,0.0000,1.0000,0.0000,0.0000,0.9920,0.0000,-0.1263,1.2104</td><td></td><td></td><td></td><td></td></tr>
<tr><th>16</th><td colspan="7">-0.9629,-0.0000,0.2700,0.6504,-0.0000,1.0000,0.0000,0.0000,-0.2700,0.0000,-0.9629,1.3682</td><td></td><td></td><td></td><td></td></tr>
<tr><th>17</th><td colspan="7">0.0431,-0.0000,0.9991,-1.3335,0.0000,1.0000,0.0000,0.0000,0.9991,0.0000,-0.0431,1.9280</td><td></td><td></td><td></td><td></td></tr>
<tr><th>18</th><td colspan="7">0.9952,-0.0000,-0.0979,0.6512,0.0000,1.0000,-0.0000,0.0000,0.0979,0.0000,0.9952,1.6578</td><td></td><td></td><td></td><td></td></tr>
<tr><th>19</th><td colspan="7">0.9237,-0.0000,-0.3830,0.7042,0.0000,1.0000,-0.0000,0.0000,-0.3830,0.0000,-0.9237,1.3098</td><td></td><td></td><td></td><td></td></tr>
<tr><th>20</th><td colspan="7">-0.2580,-0.0000,-0.9662,1.0613,-0.0000,1.0000,-0.0000,0.0000,0.9662,0.0000,-0.2580,1.3537</td><td></td><td></td><td></td><td></td></tr>
<tr><th>21</th><td colspan="7">0.4709,-0.0000,-0.8822,0.4348,0.0000,1.0000,-0.0000,0.0000,0.8822,0.0000,0.4709,1.2977</td><td></td><td></td><td></td><td></td></tr>
<tr><th>22</th><td colspan="7">0.6078,-0.0000,0.7941,0.5999,0.0000,1.0000,0.0000,0.0000,0.7941,0.0000,-0.6078,1.3214</td><td></td><td></td><td></td><td></td></tr>
<tr><th>23</th><td colspan="7">-0.9925,-0.0000,-0.1225,-1.8756,-0.0000,1.0000,-0.0000,0.0000,-0.1225,0.0000,0.9925,-0.1047</td><td></td><td></td><td></td><td></td></tr>
<tr><th>24</th><td colspan="7">-0.8280,-0.0000,-0.5608,0.5544,-0.0000,1.0000,-0.0000,0.0000,-0.5608,0.0000,0.8280,1.5341</td><td></td><td></td><td></td><td></td></tr>
<tr><th>25</th><td colspan="7">-0.8957,-0.0000,0.4446,1.1570,-0.0000,1.0000,0.0000,0.0000,-0.4446,0.0000,-0.8957,1.2941</td><td></td><td></td><td></td><td></td></tr>
<tr><th>26</th><td colspan="7">0.9559,-0.0000,-0.2937,1.3093,0.0000,1.0000,-0.0000,0.0000,-0.2937,0.0000,-0.9559,1.4649</td><td></td><td></td><td></td><td></td></tr>
<tr><th>27</th><td colspan="7">0.4668,-0.0000,-0.8844,-1.4114,0.0000,1.0000,-0.0000,0.0000,-0.8844,0.0000,-0.4668,1.9079</td><td></td><td></td><td></td><td></td></tr>
<tr><th>28</th><td colspan="7">-0.2783,-0.0000,0.4987,1.1887,-0.0000,1.0000,0.0000,0.0000,0.4987,0.0000,0.2783,1.1588</td><td></td><td></td><td></td><td></td></tr>
        </tbody>
      </table>
    </div>
    <div class="vscroll"><button aria-label="Nach oben"><svg viewBox="0 0 7 4"><path d="m0 4 3.500-4L7 4z" fill="#666"/></svg></button><i></i><span></span><button aria-label="Nach unten"><svg viewBox="0 0 7 4"><path d="m0 0 3.500 4L7 0z" fill="#666"/></svg></button></div>
  </div>

  <div class="sheetbar">
    <div class="arrows"><svg viewBox="0 0 4 8"><path d="M4 0v8L0 4z" fill="#aaa"/></svg><svg viewBox="0 0 4 8"><path d="M0 0v8l4-4z" fill="#aaa"/></svg></div>
    <button class="tab">gras</button>
    <button class="plus" aria-label="Neues Blatt"><svg viewBox="0 0 18 18"><circle cx="9" cy="9" r="7.500" fill="none" stroke="#777"/><path d="M9 5v8M5 9h8" stroke="#555" stroke-width="2"/></svg></button>
    <span class="push"></span><span class="dots"></span>
    <div class="hscroll"><button aria-label="Nach links"><svg viewBox="0 0 4 8"><path d="M4 0v8L0 4z" fill="#666"/></svg></button><i></i><span></span><button aria-label="Nach rechts"><svg viewBox="0 0 4 8"><path d="M0 0v8l4-4z" fill="#666"/></svg></button></div>
  </div>

  <div class="sbar">
    <span>BEREIT</span>
    <svg class="macro" viewBox="0 0 14 14"><path d="M2 4h11.500v9.500H2zM2 7h11M2 10h11M6 7v6M10 7v6" fill="none" stroke="#ddd"/><path d="M6 1h8v3H6z" fill="#ddd"/><circle cx="3" cy="3" r="3" fill="#fff"/></svg>
    <span class="push"></span>
    <button class="on" aria-label="Normal"><svg viewBox="0 0 14 14"><path d="M1 1h12v12H1zM1 5h12M1 9h12M5 1v12M9 1v12" fill="none" stroke="#fff"/></svg></button>
    <button aria-label="Seitenlayout"><svg viewBox="0 0 14 14"><path d="M.5 1h13v12H.5zM3.500 3h7v8h-7zM5 5h4M5 7h4M5 9h4" fill="none" stroke="#eee"/></svg></button>
    <button aria-label="Umbruchvorschau"><svg viewBox="0 0 14 14"><path d="M.5 1h13v12H.5z" fill="none" stroke="#eee"/><path d="M1 1h4v7H1zM6 1h4v7H6z" fill="#fff"/></svg></button>
    <button class="pm" aria-label="Verkleinern"><svg viewBox="0 0 8 8"><path d="M1 4h6" stroke="#fff" stroke-width="2"/></svg></button><input type="range" min="0" max="100" value="50" aria-label="Zoom"><button class="pm" aria-label="Vergrößern"><svg viewBox="0 0 8 8"><path d="M0 4h8M4 0v8" stroke="#fff" stroke-width="2"/></svg></button>
    <span class="zoom">100 %</span>
  </div>
</div>
</body>
</html>
```
FILE: styles.css
```css
* { box-sizing: border-box; }
body { margin: 0; background: #262626; font: 11px/13px Roboto, sans-serif; color: #eee; overflow: hidden; }
button, select, input { font: inherit; color: inherit; margin: 0; padding: 0; border: 0; background: none; border-radius: 0; }
select { appearance: none; }
i, em { font-style: normal; }
svg { display: block; flex: none; }
.defs { position: absolute; width: 0; height: 0; }
.push { flex: 1; }
.s14 { width: 14px; height: 14px; }

/* ---------- renderer: left side ---------- */
.app { display: grid; grid-template-columns: minmax(0, 1fr) 798px; height: 100vh; }
.left { display: flex; flex-direction: column; min-width: 0; border-right: 4px solid #000; }
.topline { height: 15px; flex: none; background: #0e0e0e; border-top: 3px solid #262626; }
.viewport { flex: 1; min-height: 0; background: #7f7f7f; display: flex; align-items: center; padding: 0 122px; }
.render { width: 100%; height: 512px; }
.controls { height: 45px; background: linear-gradient(#262626 60%, #0a0a0a); border-bottom: 4px solid #000; overflow: hidden; }
.status { display: flex; align-items: center; gap: 2px; height: 15px; font-size: 9px; padding-right: 2px; }
.progress { width: 45px; height: 11px; background: #888; border: 1px solid #bbb; border-left: 0; }
.stats { margin-left: auto; }
.mem { width: 104px; height: 11px; border: 1px solid #aaa; display: flex; justify-content: flex-end; padding: 1px; }
.mem i { width: 12px; background: #7a6468; }
.tools { display: flex; align-items: center; height: 26px; margin-left: -8px; }
.tools button { width: 26px; height: 22px; display: grid; place-items: center; flex: none; }
.tools .nar { width: 24px; }
.tools svg:not(.s14) { width: 16px; height: 16px; }
.tools hr { width: 1px; height: 20px; margin: 0 1px; border: 0; background: #666; flex: none; }
.tools .dim { opacity: .9; }
.tools .space { width: 13px; }
.tabs { height: 22px; padding-top: 4px; background: #262626; border-bottom: 1px solid #111; overflow: hidden; flex: none; }
.tabs button { display: block; margin-left: -30px; width: 64px; height: 18px; padding-right: 18px; text-align: right; color: #ccc; font-size: 12px; background: #464646; clip-path: polygon(0 0, 78% 0, 84% 12%, 100% 100%, 0 100%); }
.graph { position: relative; height: 403px; flex: none; background: #464646; overflow: hidden; }
.edges { position: absolute; inset: 0; width: 100%; height: 100%; }
.minimap { position: absolute; left: 0; top: 0; width: 101px; height: 136px; background: #464646; border: 1px solid #000; border-left: 0; }
.node { position: absolute; height: 22px; display: flex; border: 1px solid #222; border-radius: 4px; overflow: hidden; font-size: 9px; color: #fff; background: linear-gradient(#7c6a78, #564552 50%, #4c3c4a); }
.node > svg { width: 19px; height: 20px; padding: 2px; border-right: 1px solid #222; background: linear-gradient(#a0a0a0, #777); }
.node span { flex: 1; text-align: center; line-height: 18px; white-space: nowrap; }
.node.green { background: linear-gradient(#5f7468, #3e5447 50%, #384c40); }
.node.blue { background: linear-gradient(#5c5c80, #323260 50%, #2c2c58); }
.node.brown { background: linear-gradient(#76664f, #58452c 50%, #503f28); }
.node.gray { background: linear-gradient(#6a6a6a, #464646 50%, #404040); }
.node.red { background: linear-gradient(#7a4648, #4a1416 50%, #3e0f10); }
.node.sel { border: 2px solid #96780c; }
.node.sel > svg { width: 18px; height: 18px; padding: 1px; }
.node.sel span { line-height: 16px; }

/* ---------- renderer: node inspector ---------- */
.right { display: flex; flex-direction: column; min-width: 0; }
.box { border: 1px solid #151515; border-radius: 6px; }
.box header { display: flex; align-items: center; height: 21px; padding-right: 2px; border-radius: 5px 5px 0 0; }
.box .ttl { flex: 1; }
.outer { background: #393939; border-radius: 0; border-left: 0; border-right: 0; padding: 0 3px 3px 63px; }
.outer > header { margin: 0 -3px 0 -63px; padding-left: 57px; background: linear-gradient(#555, #393939); border-radius: 0; }
.b1, .b2 { padding: 0 3px 3px 25px; }
.b1 { background: #474747; margin-top: 6px; }
.b2 { background: #555; margin-top: 4px; }
.b1 > header, .b2 > header { margin: 0 -3px 0 -25px; }
.b1 > header { background: linear-gradient(#5c5c5c, #474747); }
.b2 > header { background: linear-gradient(#747474, #575757); }
.b3 { background: linear-gradient(#666, #6e6e6e); margin-top: 6px; padding: 0 3px 2px 18px; }
.b3 > header { margin: 0 -3px 0 -18px; background: linear-gradient(#848484, #666); }
.b4 { background: linear-gradient(#757575, #8c8c8c); margin-top: 6px; }
.b4 > header { height: 20px; }
.pin { width: 24px; height: 22px; margin: 0 4px 0 -8px; border: 1px solid #1c1520; border-radius: 5px; background: linear-gradient(#b9a0b4, #8a7086); display: grid; place-items: center; flex: none; }
.b4 .pin { margin-left: -1px; }
.pin svg { width: 16px; height: 16px; }
.tri { width: 0; height: 0; border: 4px solid transparent; border-top: 9px solid #eee; border-bottom: 0; margin-right: 5px; }
.tri.side { border: 4px solid transparent; border-left: 9px solid #eee; border-right: 0; }
.sel-w { position: relative; }
.sel-w::after { content: ""; position: absolute; right: 3px; bottom: 3px; border: 3px solid transparent; border-top: 5px solid #ccc; border-bottom: 0; pointer-events: none; }
.sel-w select { display: block; width: 106px; height: 17px; padding-left: 6px; }
.sel-w select, .btns button, .mini, .file button { background: linear-gradient(#3a3a3a, #1c1c1c 50%, #262626); border: 1px solid #000; border-radius: 3px; }
.mini { width: 16px; height: 17px; margin-left: 4px; padding: 0 1px; }
.btns { display: flex; gap: 4px; align-items: center; padding-top: 4px; margin-left: -21px; }
.btns button { width: 77px; height: 17px; }
.btns.upd { margin-left: 29px; gap: 8px; padding-top: 3px; }
.file { display: flex; align-items: center; gap: 28px; height: 25px; margin-left: -9px; color: #aaa; }
.file button { width: 19px; height: 19px; display: grid; place-items: center; }
.file svg { width: 14px; height: 14px; }
.data { display: flex; justify-content: space-between; margin-left: 29px; height: 112px; background: #262626; padding: 5px 6px 4px 5px; overflow: hidden; }
.lines { white-space: nowrap; outline: none; }
.lines mark { background: #5e4a10; color: #15120a; }
.scr { width: 14px; height: 102px; }
.cfg { margin: auto auto 4px 6px; height: 16px; }

/* ---------- spreadsheet window ---------- */
.excel { position: absolute; left: 474px; top: 3px; width: 923px; display: flex; flex-direction: column; background: #dedede; color: #262626; font: 11px/15px "Open Sans", "Noto Sans", sans-serif; border: 1px solid #8a8a8a; border-top: 0; }
.head { position: relative; height: 54px; background: #dedede; }
.clouds { position: absolute; right: 0; top: 0; width: 56%; height: 54px; }
.title { position: relative; height: 29px; display: flex; align-items: center; justify-content: space-between; padding: 2px 6px 0 10px; }
.qat { display: flex; align-items: center; width: 260px; }
.qat > svg:first-child { width: 17px; height: 17px; margin-right: 12px; }
.qat button svg { width: 16px; height: 16px; }
.qat .lt { opacity: .5; margin: 0 14px 0 3px; }
.qat button + button { margin-left: 13px; }
.qat .cust { width: 7px; height: 8px; margin-left: 2px; }
.title h1 { margin: 0; font: inherit; color: #666; }
.winbtn { display: flex; gap: 15px; align-items: center; width: 266px; justify-content: flex-end; color: #aaa; font-weight: bold; font-size: 14px; padding-right: 1px; }
.winbtn button { width: 14px; }
.winbtn svg { width: 14px; height: 12px; }
.caret { width: 7px; height: 4px; }
nav { position: relative; display: flex; height: 25px; align-items: stretch; font-size: 12px; }
nav a { color: #333; text-decoration: none; padding: 0 11px 0 12px; line-height: 25px; }
nav .datei { background: #2f2f2f; color: #fff; width: 59px; margin-right: 4px; }
nav .start { color: #217346; background: #f3f3f3; border: 1px solid #bbb; border-bottom: 0; line-height: 24px; padding: 0 11px; margin-bottom: -1px; z-index: 1; }
nav .user { display: flex; align-items: center; gap: 8px; margin-left: auto; padding: 0 8px 6px 0; color: #555; font-size: 11px; }
.ribbon { display: flex; height: 93px; background: #f3f3f3; border: 1px solid #ababab; border-width: 1px 0; position: relative; }
.ribbon section { display: flex; flex-direction: column; margin: 2px 0; border-right: 1px solid #b8b8b8; }
.ribbon .body { flex: 1; }
.ribbon footer { display: flex; align-items: center; height: 12px; padding-right: 4px; }
.ribbon footer span { flex: 1; text-align: center; white-space: nowrap; }
.launch { width: 8px; height: 8px; }
.g1 { width: 107px; } .g2 { width: 207px; } .g3 { width: 113px; } .g4 { width: 87px; } .g5 { width: 168px; } .g6 { width: 98px; } .g7 { width: 77px; }
.ribbon .rows > div { display: flex; align-items: center; height: 23px; }
.ribbon button svg:not(.caret) { width: 16px; height: 16px; }
.g1 .body { display: flex; }
.paste { width: 46px; margin: 5px 8px 0 11px; display: flex; flex-direction: column; align-items: center; height: 64px; }
.ribbon .paste svg:not(.caret) { width: 28px; height: 30px; margin-bottom: 3px; }
.paste .caret { margin-top: 6px; }
.g1 .rows .caret { margin-left: 6px; }
.g1 footer span { padding-left: 2px; }
.two { padding: 8px 4px 0; }
.two > div { display: flex; align-items: center; height: 22px; }
.two > .fmt { margin-top: 8px; padding-left: 3px; font-size: 12px; color: #444; }
.cb { position: relative; background: #fff; border: 1px solid #ababab; height: 22px; display: block; }
.cb::after { content: ""; position: absolute; right: 4px; top: 9px; border: 3px solid transparent; border-top-color: #666; border-bottom: 0; pointer-events: none; }
.cb select { display: block; width: 100%; height: 20px; padding-left: 2px; }
.font { width: 112px; } .size { width: 43px; margin-left: -1px; }
.num { width: 79px; margin-left: 4px; }
.ab { font-size: 14px; color: #555; margin-left: 6px; width: 15px; display: flex; }
.ab.sm { font-size: 12px; }
.ab sup { font-size: 9px; line-height: 9px; color: #3e73b5; }
.fmt button { width: 16px; height: 22px; margin-right: 5px; display: grid; place-items: center; }
.fmt hr, .g3 hr { width: 1px; height: 22px; border: 0; margin: 0 6px; background: #bbb; flex: none; }
.fmt .caret { margin-right: 2px; }
.fmt .acol { font-size: 13px; font-weight: bold; line-height: 14px; height: 17px; border-bottom: 4px solid #f00; margin-left: 5px; }
.fmt i { font-style: italic; }
.g3 .body { padding-left: 4px; }
.g3 button { width: 22px; height: 23px; display: grid; place-items: center; }
.g3 button.on { background: #9fd5b7; }
.g3 .wide { width: 30px; }
.g3 hr { margin: 0 3px 0 2px; }
.g3 hr + .wide { width: 24px; }
.g4 .rows button { margin-left: 7px; }
.g4 .caret { margin-left: 4px; }
.g4 .rows .pct { font-size: 14px; color: #555; margin-left: 12px; }
.g4 .k { font-size: 9px; color: #444; font-weight: 600; }
.dec { font-size: 9px; line-height: 9px; color: #444; display: flex; flex-direction: column; align-items: flex-end; }
.dec em { color: #3e73b5; }
.lb { display: flex; align-items: center; gap: 3px; white-space: nowrap; }
.g5 .body, .g6 .body { padding-left: 7px; }
.far { margin-left: 8px; }
.g7 .body { padding-left: 7px; }
.g7 .caret { margin: 0 8px 0 5px; }
.fold { margin: auto 10px 4px auto; }
.ribbon .fold svg:not(.caret) { width: 10px; height: 6px; }
.fbar { display: flex; align-items: center; height: 46px; padding: 0 5px; }
.fbar > div { height: 26px; background: #fff; border: 1px solid #b5b5b5; display: flex; align-items: center; }
.namebox { width: 102px; padding: 0 6px; }
.namebox input { width: 82px; font-size: 12px; }
.dots { width: 2px; height: 10px; margin: 0 14px; background: repeating-linear-gradient(#777 0 2px, transparent 2px 4px); }
.fx { width: 110px; justify-content: space-around; }
.fx svg { width: 17px; height: 16px; }
.fx i { font: italic bold 23px/22px "Liberation Serif", serif; color: #555; }
.formula { flex: 1; margin-left: 4px; }
.formula input { flex: 1; min-width: 0; height: 22px; outline: none; }
.formula svg { width: 13px; height: 9px; margin-right: 1px; }
.sheet { display: flex; gap: 4px; height: 568px; padding-right: 4px; border-bottom: 1px solid #999; }
.gridwrap { width: 899px; overflow: hidden; border-right: 1px solid #999; }
table { table-layout: fixed; width: 906px; border-collapse: separate; border-spacing: 0; }
col { width: 80px; } .c0 { width: 26px; }
th { font-weight: normal; font-size: 13px; padding: 2px 0 0; height: 20px; line-height: 17px; color: #333; }
thead th { border-right: 1px solid #b5b5b5; border-bottom: 1px solid #999; background: #dedede; }
tbody th { border-right: 1px solid #999; border-bottom: 1px solid #c4c4c4; background: #e2e2e2; }
thead .corner { background: linear-gradient(to bottom right, #dedede 68%, #b2b2b2 68%); }
td { background: #fff; border-right: 1px solid #d0d0d0; border-bottom: 1px solid #d0d0d0; height: 20px; padding: 2px 0 0 2px; font-size: 13px; line-height: 17px; color: #000; white-space: nowrap; }
.vscroll { width: 14px; display: flex; flex-direction: column; background: #b8b8b8; margin-top: 2px; }
.vscroll button, .hscroll button { width: 14px; height: 14px; background: #fff; border: 1px solid #ababab; display: grid; place-items: center; flex: none; }
.vscroll button svg { width: 7px; height: 4px; }
.vscroll i { height: 226px; background: #fff; border: 1px solid #ababab; }
.vscroll span { flex: 1; }
.sheetbar { display: flex; align-items: flex-start; height: 27px; padding-right: 22px; }
.arrows { display: flex; gap: 25px; width: 100px; padding: 9px 0 0 27px; }
.arrows svg { width: 4px; height: 8px; }
.tab { width: 50px; height: 24px; background: #fff; border: 1px solid #aaa; border-width: 0 1px 2px; border-bottom-color: #217346; color: #217346; font-weight: bold; font-size: 12px; }
.plus { margin: 5px 0 0 32px; }
.plus svg { width: 18px; height: 18px; }
.sheetbar .dots { margin-top: 8px; }
.hscroll { display: flex; width: 330px; height: 15px; margin-top: 6px; background: #b8b8b8; }
.hscroll button { height: 15px; }
.hscroll svg { width: 4px; height: 8px; }
.hscroll i { width: 270px; background: #fff; border: 1px solid #ababab; }
.hscroll span { flex: 1; }
.sbar { display: flex; align-items: center; height: 22px; background: #2f2f2f; color: #eee; padding: 0 20px 0 7px; }
.macro { width: 14px; height: 14px; margin-left: 18px; }
.sbar button { width: 38px; height: 22px; display: grid; place-items: center; }
.sbar button svg { width: 14px; height: 14px; }
.sbar button.on { background: #000; }
.sbar .pm { width: 8px; }
.sbar .pm svg { width: 8px; height: 8px; }
.sbar button + .pm { margin-left: 4px; }
.sbar input { appearance: none; width: 100px; height: 12px; margin: 0 4px; background: linear-gradient(#eee, #eee) center / 100% 1px no-repeat; }
.sbar input::-webkit-slider-thumb { appearance: none; width: 4px; height: 11px; background: #fff; }
.zoom { margin-left: 14px; }
```
